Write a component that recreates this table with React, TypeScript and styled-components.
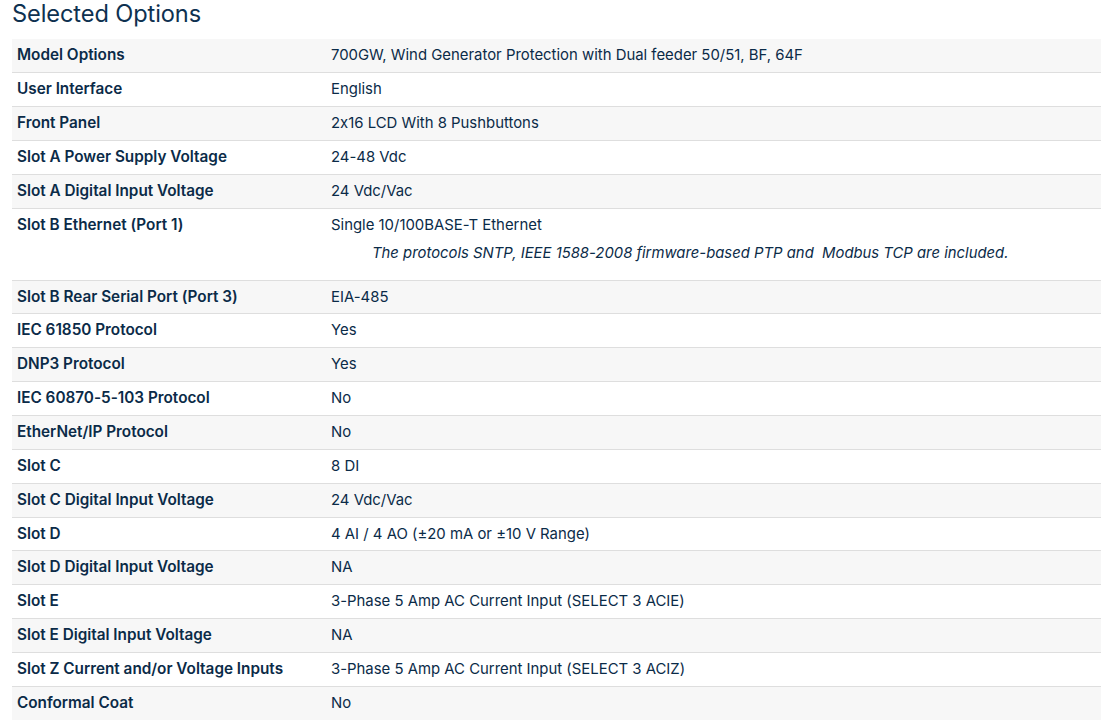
import React from "react";
import styled, { createGlobalStyle } from "styled-components";

const Global = createGlobalStyle`
  html, body { margin: 0; padding: 0; background: #ffffff; }
  body {
    font-family: Inter, "Open Sans", Arial, sans-serif;
    color: #0b2b48;
    font-feature-settings: "calt" 0;
  }
`;

const Page = styled.div`
  padding: 0 0 0 12px;
  width: 1101px;
  box-sizing: border-box;
`;

const Heading = styled.h2`
  margin: 0;
  padding-top: 1px;
  height: 38.4px;
  font-size: 23.6px;
  font-weight: 400;
  color: #0e3150;
  line-height: 26px;
  letter-spacing: -0.1px;
`;

const Table = styled.div`
  display: flex;
  flex-direction: column;
  color: #0b2b48;
`;

const Row = styled.div<{ $shade: boolean }>`
  display: grid;
  grid-template-columns: 314px 1fr;
  background: ${(p) => (p.$shade ? "#f7f7f7" : "#ffffff")};
  border-bottom: 1px solid #dedede;
  padding: 6px 0 6.85px 0;
  line-height: 20px;
  &:last-child { border-bottom: none; }
`;

const Label = styled.div`
  padding: 0 5px;
  font-size: 15.3px;
  font-weight: 600;
  white-space: nowrap;
`;

const Value = styled.div`
  padding: 0 5px;
  font-size: 14.9px;
  font-weight: 400;
`;

const Note = styled.div`
  font-style: italic;
  font-size: 14.85px;
  padding: 8px 0 10.15px 41px;
  line-height: 20px;
`;

const rows: [string, string, string?][] = [
  ["Model Options", "700GW, Wind Generator Protection with Dual feeder 50/51, BF, 64F"],
  ["User Interface", "English"],
  ["Front Panel", "2x16 LCD With 8 Pushbuttons"],
  ["Slot A Power Supply Voltage", "24-48 Vdc"],
  ["Slot A Digital Input Voltage", "24 Vdc/Vac"],
  [
    "Slot B Ethernet (Port 1)",
    "Single 10/100BASE-T Ethernet",
    "The protocols SNTP, IEEE 1588-2008 firmware-based PTP and\u00a0 Modbus TCP are included.",
  ],
  ["Slot B Rear Serial Port (Port 3)", "EIA-485"],
  ["IEC 61850 Protocol", "Yes"],
  ["DNP3 Protocol", "Yes"],
  ["IEC 60870-5-103 Protocol", "No"],
  ["EtherNet/IP Protocol", "No"],
  ["Slot C", "8 DI"],
  ["Slot C Digital Input Voltage", "24 Vdc/Vac"],
  ["Slot D", "4 AI / 4 AO (\u00b120 mA or \u00b110 V Range)"],
  ["Slot D Digital Input Voltage", "NA"],
  ["Slot E", "3-Phase 5 Amp AC Current Input (SELECT 3 ACIE)"],
  ["Slot E Digital Input Voltage", "NA"],
  ["Slot Z Current and/or Voltage Inputs", "3-Phase 5 Amp AC Current Input (SELECT 3 ACIZ)"],
  ["Conformal Coat", "No"],
];

export default function App() {
  return (
    <>
      <Global />
      <Page>
        <Heading>Selected Options</Heading>
        <Table>
          {rows.map(([label, value, note], i) => (
            <Row key={label} $shade={i % 2 === 0}>
              <Label>{label}</Label>
              <Value>
                {value}
                {note && <Note>{note}</Note>}
              </Value>
            </Row>
          ))}
        </Table>
      </Page>
    </>
  );
}
